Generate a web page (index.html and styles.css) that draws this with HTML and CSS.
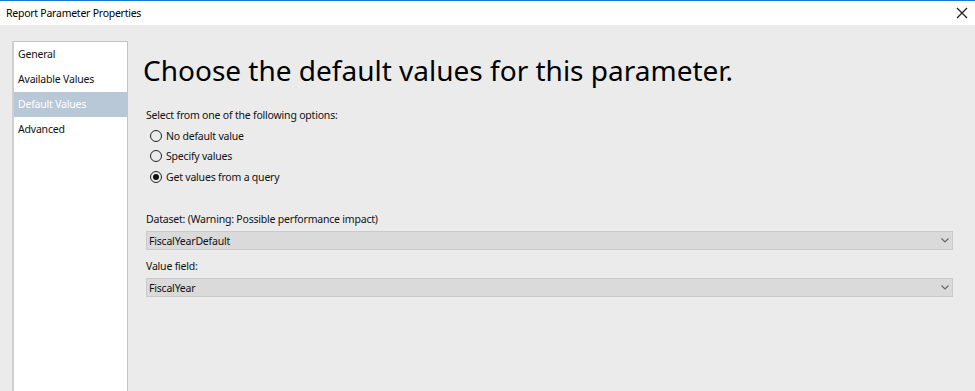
FILE: index.html
```html
<!DOCTYPE html>
<html lang="en">
<head>
    <meta charset="UTF-8">
    <title>Report Parameter Properties</title>
    <link rel="stylesheet" href="styles.css">
</head>
<body>
    <div class="dialog">
        <div class="titlebar">
            <span class="title">Report Parameter Properties</span>
            <button class="close" aria-label="Close">
                <svg width="12" height="12" viewBox="0 0 12 12">
                    <path d="M1 1 L11 11 M11 1 L1 11" stroke="#222" stroke-width="1.3" fill="none"/>
                </svg>
            </button>
        </div>
        <div class="content">
            <ul class="nav">
                <li>General</li>
                <li>Available Values</li>
                <li class="active">Default Values</li>
                <li>Advanced</li>
            </ul>
            <div class="page">
                <h1>Choose the default values for this parameter.</h1>
                <p class="label intro">Select from one of the following options:</p>
                <div class="options">
                    <label class="option"><span class="radio"></span>No default value</label>
                    <label class="option"><span class="radio"></span>Specify values</label>
                    <label class="option"><span class="radio checked"></span>Get values from a query</label>
                </div>
                <p class="label dataset-label">Dataset: (Warning: Possible performance impact)</p>
                <div class="select">
                    <span>FiscalYearDefault</span>
                    <svg width="8" height="5" viewBox="0 0 8 5"><path d="M0.5 0.5 L4 4 L7.5 0.5" stroke="#666" stroke-width="1.2" fill="none"/></svg>
                </div>
                <p class="label">Value field:</p>
                <div class="select">
                    <span>FiscalYear</span>
                    <svg width="8" height="5" viewBox="0 0 8 5"><path d="M0.5 0.5 L4 4 L7.5 0.5" stroke="#666" stroke-width="1.2" fill="none"/></svg>
                </div>
            </div>
        </div>
    </div>
</body>
</html>
```
FILE: styles.css
```css
* {
    box-sizing: border-box;
    margin: 0;
    padding: 0;
}

html,
body {
    height: 100%;
}

body {
    font-family: 'Noto Sans', 'Open Sans', sans-serif;
    font-size: 10.5px;
    letter-spacing: -0.2px;
    color: #111;
    background: #ebebeb;
    overflow: hidden;
}

.dialog {
    display: flex;
    flex-direction: column;
    height: 100%;
}

.titlebar {
    display: flex;
    align-items: center;
    justify-content: space-between;
    height: 25px;
    background: #ffffff;
    border-top: 1px solid #1979d6;
    padding: 0 4px 0 6px;
}

.title {
    font-size: 10.5px;
    letter-spacing: -0.25px;
    color: #000;
}

.close {
    display: flex;
    background: none;
    border: none;
    padding: 0 3px;
}

.content {
    flex: 1;
    display: flex;
    padding: 16px 0 0 12px;
}

.nav {
    list-style: none;
    width: 116px;
    background: #ffffff;
    border: 1px solid #c4c4c4;
    border-left: 2px solid #cfcfcf;
    border-bottom: none;
}

.nav li {
    height: 25px;
    line-height: 25px;
    padding-left: 4px;
    color: #111;
}

.nav li.active {
    background: #b9c8d7;
    color: #ffffff;
}

.page {
    flex: 1;
    padding: 0 22px 0 18px;
}

h1 {
    font-weight: normal;
    font-size: 28px;
    letter-spacing: 0;
    color: #000;
    margin-left: -3px;
    margin-top: 9px;
    line-height: 40px;
}

.label {
    margin-top: 7px;
    line-height: 18px;
}

.intro {
    margin-top: 16px;
}

.options {
    display: flex;
    flex-direction: column;
    gap: 2px;
    margin-top: 3px;
    padding-left: 4px;
}

.option {
    display: flex;
    align-items: center;
    height: 18px;
}

.option:last-child {
    margin-top: 1px;
}

.radio {
    width: 12px;
    height: 12px;
    border: 1px solid #222;
    border-radius: 50%;
    margin-right: 4px;
    display: flex;
    align-items: center;
    justify-content: center;
}

.radio.checked::after {
    content: "";
    width: 6px;
    height: 6px;
    border-radius: 50%;
    background: #111;
}

.dataset-label {
    margin-top: 24px;
}

.select {
    display: flex;
    align-items: center;
    justify-content: space-between;
    height: 19px;
    background: #dadada;
    border: 1px solid #cacaca;
    padding: 0 3px 0 2px;
    margin-top: 3px;
}
```
